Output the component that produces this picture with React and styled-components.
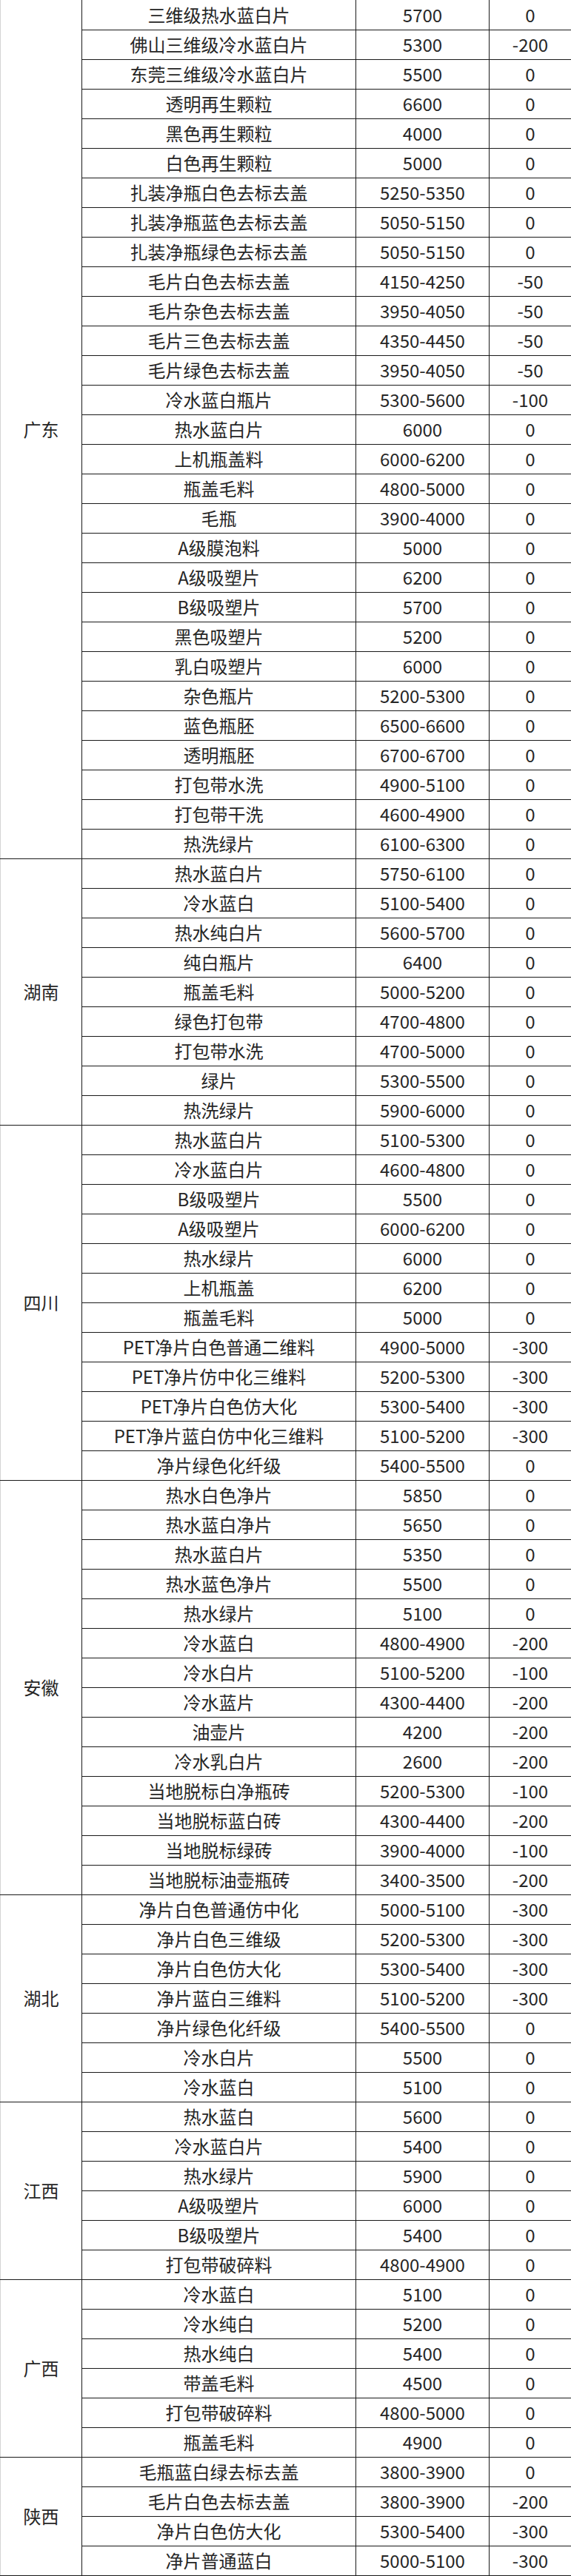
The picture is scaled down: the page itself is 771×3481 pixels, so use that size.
import React from "react";
import styled, { createGlobalStyle } from "styled-components";

const GlobalStyle = createGlobalStyle`
  html, body {
    margin: 0;
    padding: 0;
    background: #ffffff;
  }
  body {
    font-family: "Noto Sans CJK SC", "Noto Sans", sans-serif;
    color: #262626;
  }
`;

const groups = [
  {
    province: "广东",
    rows: [
      ["三维级热水蓝白片", "5700", "0"],
      ["佛山三维级冷水蓝白片", "5300", "-200"],
      ["东莞三维级冷水蓝白片", "5500", "0"],
      ["透明再生颗粒", "6600", "0"],
      ["黑色再生颗粒", "4000", "0"],
      ["白色再生颗粒", "5000", "0"],
      ["扎装净瓶白色去标去盖", "5250-5350", "0"],
      ["扎装净瓶蓝色去标去盖", "5050-5150", "0"],
      ["扎装净瓶绿色去标去盖", "5050-5150", "0"],
      ["毛片白色去标去盖", "4150-4250", "-50"],
      ["毛片杂色去标去盖", "3950-4050", "-50"],
      ["毛片三色去标去盖", "4350-4450", "-50"],
      ["毛片绿色去标去盖", "3950-4050", "-50"],
      ["冷水蓝白瓶片", "5300-5600", "-100"],
      ["热水蓝白片", "6000", "0"],
      ["上机瓶盖料", "6000-6200", "0"],
      ["瓶盖毛料", "4800-5000", "0"],
      ["毛瓶", "3900-4000", "0"],
      ["A级膜泡料", "5000", "0"],
      ["A级吸塑片", "6200", "0"],
      ["B级吸塑片", "5700", "0"],
      ["黑色吸塑片", "5200", "0"],
      ["乳白吸塑片", "6000", "0"],
      ["杂色瓶片", "5200-5300", "0"],
      ["蓝色瓶胚", "6500-6600", "0"],
      ["透明瓶胚", "6700-6700", "0"],
      ["打包带水洗", "4900-5100", "0"],
      ["打包带干洗", "4600-4900", "0"],
      ["热洗绿片", "6100-6300", "0"],
    ],
  },
  {
    province: "湖南",
    rows: [
      ["热水蓝白片", "5750-6100", "0"],
      ["冷水蓝白", "5100-5400", "0"],
      ["热水纯白片", "5600-5700", "0"],
      ["纯白瓶片", "6400", "0"],
      ["瓶盖毛料", "5000-5200", "0"],
      ["绿色打包带", "4700-4800", "0"],
      ["打包带水洗", "4700-5000", "0"],
      ["绿片", "5300-5500", "0"],
      ["热洗绿片", "5900-6000", "0"],
    ],
  },
  {
    province: "四川",
    rows: [
      ["热水蓝白片", "5100-5300", "0"],
      ["冷水蓝白片", "4600-4800", "0"],
      ["B级吸塑片", "5500", "0"],
      ["A级吸塑片", "6000-6200", "0"],
      ["热水绿片", "6000", "0"],
      ["上机瓶盖", "6200", "0"],
      ["瓶盖毛料", "5000", "0"],
      ["PET净片白色普通二维料", "4900-5000", "-300"],
      ["PET净片仿中化三维料", "5200-5300", "-300"],
      ["PET净片白色仿大化", "5300-5400", "-300"],
      ["PET净片蓝白仿中化三维料", "5100-5200", "-300"],
      ["净片绿色化纤级", "5400-5500", "0"],
    ],
  },
  {
    province: "安徽",
    rows: [
      ["热水白色净片", "5850", "0"],
      ["热水蓝白净片", "5650", "0"],
      ["热水蓝白片", "5350", "0"],
      ["热水蓝色净片", "5500", "0"],
      ["热水绿片", "5100", "0"],
      ["冷水蓝白", "4800-4900", "-200"],
      ["冷水白片", "5100-5200", "-100"],
      ["冷水蓝片", "4300-4400", "-200"],
      ["油壶片", "4200", "-200"],
      ["冷水乳白片", "2600", "-200"],
      ["当地脱标白净瓶砖", "5200-5300", "-100"],
      ["当地脱标蓝白砖", "4300-4400", "-200"],
      ["当地脱标绿砖", "3900-4000", "-100"],
      ["当地脱标油壶瓶砖", "3400-3500", "-200"],
    ],
  },
  {
    province: "湖北",
    rows: [
      ["净片白色普通仿中化", "5000-5100", "-300"],
      ["净片白色三维级", "5200-5300", "-300"],
      ["净片白色仿大化", "5300-5400", "-300"],
      ["净片蓝白三维料", "5100-5200", "-300"],
      ["净片绿色化纤级", "5400-5500", "0"],
      ["冷水白片", "5500", "0"],
      ["冷水蓝白", "5100", "0"],
    ],
  },
  {
    province: "江西",
    rows: [
      ["热水蓝白", "5600", "0"],
      ["冷水蓝白片", "5400", "0"],
      ["热水绿片", "5900", "0"],
      ["A级吸塑片", "6000", "0"],
      ["B级吸塑片", "5400", "0"],
      ["打包带破碎料", "4800-4900", "0"],
    ],
  },
  {
    province: "广西",
    rows: [
      ["冷水蓝白", "5100", "0"],
      ["冷水纯白", "5200", "0"],
      ["热水纯白", "5400", "0"],
      ["带盖毛料", "4500", "0"],
      ["打包带破碎料", "4800-5000", "0"],
      ["瓶盖毛料", "4900", "0"],
    ],
  },
  {
    province: "陕西",
    rows: [
      ["毛瓶蓝白绿去标去盖", "3800-3900", "0"],
      ["毛片白色去标去盖", "3800-3900", "-200"],
      ["净片白色仿大化", "5300-5400", "-300"],
      ["净片普通蓝白", "5000-5100", "-300"],
    ],
  },
];

const Sheet = styled.table`
  width: 771px;
  border-collapse: collapse;
  table-layout: fixed;
  border-left: 1px solid #d4d4d4;
  font-size: 24px;
  line-height: 1;
`;

const Col = styled.col`
  width: ${(p) => p.$w}px;
`;

const Row = styled.tr`
  height: 40px;
`;

const Cell = styled.td`
  padding: 0;
  text-align: center;
  vertical-align: middle;
  white-space: nowrap;
  border: 1px solid #1a1a1a;
  border-top: ${(p) => (p.$first ? "none" : "1px solid #1a1a1a")};
`;

const ProvinceCell = styled(Cell)`
  border-left: 1px solid #d4d4d4;
`;

export default function App() {
  return (
    <>
      <GlobalStyle />
      <Sheet>
        <colgroup>
          <Col $w={110} />
          <Col $w={370} />
          <Col $w={180} />
          <Col $w={111} />
        </colgroup>
        <tbody>
          {groups.map((g, gi) =>
            g.rows.map((r, ri) => {
              const first = gi === 0 && ri === 0;
              return (
                <Row key={`${gi}-${ri}`}>
                  {ri === 0 && (
                    <ProvinceCell rowSpan={g.rows.length} $first={gi === 0}>
                      {g.province}
                    </ProvinceCell>
                  )}
                  <Cell $first={first}>{r[0]}</Cell>
                  <Cell $first={first}>{r[1]}</Cell>
                  <Cell $first={first}>{r[2]}</Cell>
                </Row>
              );
            })
          )}
        </tbody>
      </Sheet>
    </>
  );
}
